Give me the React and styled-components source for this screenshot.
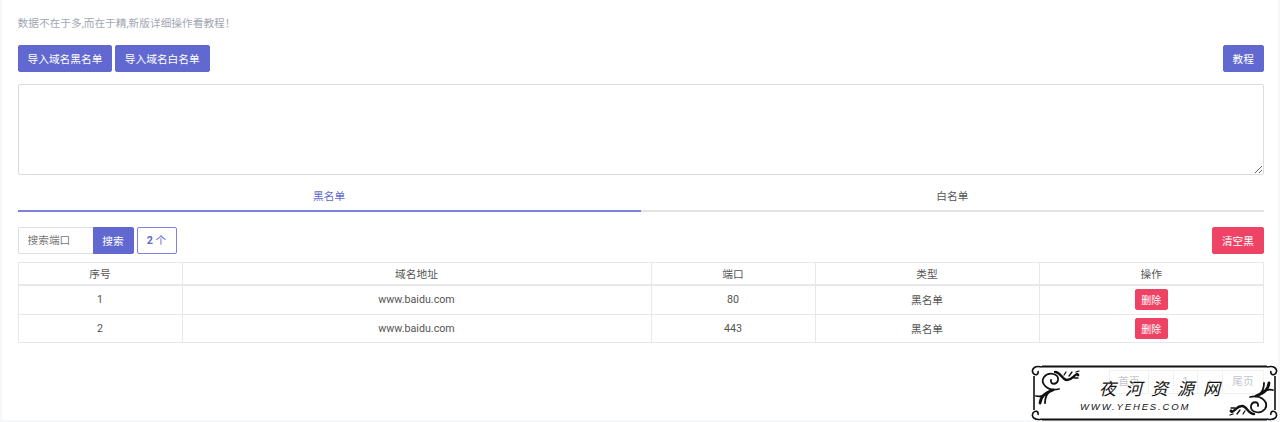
import React from "react";
import styled, { createGlobalStyle } from "styled-components";

const rows = [
  { id: 1, domain: "www.baidu.com", port: 80, type: "黑名单" },
  { id: 2, domain: "www.baidu.com", port: 443, type: "黑名单" },
];

const Global = createGlobalStyle`
  html, body {
    margin: 0;
    padding: 0;
    height: 100%;
    background: #f6f7f9;
    font-family: "Roboto", "Noto Sans CJK SC", sans-serif;
    font-size: 10.7px;
    color: #555;
    overflow: hidden;
  }
`;

const Page = styled.div`
  width: 1276px;
  height: 420px;
  margin-left: 2px;
  padding: 0 14px 0 15.5px;
  box-sizing: border-box;
  background: #fff;
  position: relative;
  display: flex;
  flex-direction: column;
`;

const Hint = styled.p`
  margin: 0;
  padding-top: 17px;
  height: 45px;
  line-height: 14px;
  box-sizing: border-box;
  color: #a2a8b3;
`;

const Toolbar = styled.div`
  display: flex;
  align-items: center;
  gap: 2.5px;
`;

const Button = styled.button`
  height: 27px;
  padding: 0 9px;
  border: 1px solid ${(p) => (p.$danger ? "#ef4365" : "#6169d0")};
  border-radius: 2px;
  background: ${(p) => (p.$danger ? "#ef4365" : "#6169d0")};
  color: #fff;
  font: inherit;
  white-space: nowrap;
  box-sizing: border-box;
`;

const PushRight = styled(Button)`
  margin-left: auto;
`;

const Textarea = styled.textarea`
  display: block;
  height: 91px;
  margin-top: 12px;
  border: 1px solid #d8dbe2;
  border-radius: 2px;
  box-sizing: border-box;
  width: 100%;
  background: #fff;
`;

const Tabs = styled.div`
  display: flex;
  margin-top: 11px;
`;

const Tab = styled.div`
  flex: 1;
  height: 26px;
  line-height: 22px;
  text-align: center;
  box-sizing: border-box;
  border-bottom: 2px solid ${(p) => (p.$active ? "#7b83dc" : "#e3e3e3")};
  color: ${(p) => (p.$active ? "#6169d0" : "#555")};
`;

const SearchBar = styled(Toolbar)`
  margin-top: 15px;
`;

const SearchInput = styled.input`
  width: 75px;
  height: 27px;
  padding: 0 9px;
  border: 1px solid #dcdfe5;
  border-right: 0;
  border-radius: 2px 0 0 2px;
  box-sizing: border-box;
  font: inherit;
  color: #555;
  &::placeholder {
    color: #777;
    opacity: 1;
  }
`;

const SearchButton = styled(Button)`
  width: 41px;
  padding: 0;
  border-radius: 0 2px 2px 0;
`;

const Joined = styled.div`
  display: flex;
`;

const Count = styled.div`
  width: 40px;
  height: 27px;
  margin-left: 0.5px;
  line-height: 25px;
  text-align: center;
  border: 1px solid #7b83dc;
  border-radius: 2px;
  box-sizing: border-box;
  color: #6169d0;
  b {
    font-weight: 700;
  }
`;

const Table = styled.table`
  width: 100%;
  margin-top: 8px;
  border-collapse: collapse;
  table-layout: fixed;
  text-align: center;
`;

const Col = styled.col`
  width: ${(p) => p.$w}px;
`;

const Th = styled.th`
  height: 21px;
  padding: 0;
  font-weight: 400;
  color: #555;
  border: 1px solid #e6e8ec;
  border-bottom-width: 2px;
`;

const Td = styled.td`
  height: 27.5px;
  padding: 0;
  color: #555;
  border: 1px solid #e6e8ec;
`;

const SmallButton = styled(Button)`
  display: block;
  margin: 0 auto;
  width: 33px;
  height: 21px;
  padding: 0;
  font-size: 10px;
`;

const Pager = styled.div`
  display: flex;
  justify-content: flex-end;
  margin-top: 27px;
`;

const PageCell = styled.div`
  width: ${(p) => p.$w}px;
  height: 24px;
  line-height: 22px;
  text-align: center;
  box-sizing: border-box;
  border: 1px solid #f0f1f3;
  border-left-width: ${(p) => (p.$first ? 1 : 0)}px;
  color: #c4c7cd;
`;

const Watermark = styled.div`
  position: absolute;
  right: -1px;
  bottom: -1px;
  width: 249px;
  height: 56px;
`;

const Frame = styled.svg`
  position: absolute;
  inset: 0;
`;

const MarkTitle = styled.div`
  position: absolute;
  left: 69px;
  top: 14px;
  font-family: "Liberation Serif", "Noto Sans CJK SC", serif;
  font-size: 17px;
  line-height: 22px;
  letter-spacing: 9px;
  font-style: italic;
  color: #111;
  white-space: nowrap;
`;

const MarkUrl = styled.div`
  position: absolute;
  left: 50px;
  top: 36px;
  font-family: "Liberation Sans", sans-serif;
  font-size: 9.5px;
  line-height: 11px;
  letter-spacing: 1.85px;
  font-style: italic;
  color: #111;
  white-space: nowrap;
`;

// 모서리 장식
const Scroll = ({ transform }) => (
  <g transform={transform} fill="none" stroke="#111" strokeLinecap="round">
    <path d="M10 38 C11 31 15 28 23 25" strokeWidth="2.8" />
    <path d="M6 31 C10 32 14 31 17 28 M15 38 C15 33 16 30 19 27" strokeWidth="1.8" />
    <path d="M29 24 C17 27 10 18 14 12 C19 6 29 9 28 15 C27 20 20 20 21 15" strokeWidth="1.8" />
    <path d="M25 7 C31 7 32 15 37 15 C42 15 43 11 47 9" strokeWidth="2.4" />
    <path d="M39 11 L42 7 M44 13 L48 13 M34 10 L36 7 M46 7 L49 6" strokeWidth="1.3" />
    <circle cx="48" cy="10" r="1.4" fill="#111" stroke="none" />
  </g>
);

const Logo = () => (
  <Watermark>
    <Frame width="249" height="56" viewBox="0 0 249 56">
      <g fill="none" stroke="#111">
        <path d="M12 1.5 H237 M12 54.5 H237" strokeWidth="1.8" />
        <path d="M4 11 V45 M245 11 V45" strokeWidth="1.6" />
        <path d="M12 2 C5 0 1 4 3 8 C5 11 9 10 8 6 M12 54 C5 56 1 52 3 48 C5 45 9 46 8 50" strokeWidth="1.6" />
        <path d="M237 2 C244 0 248 4 246 8 C244 11 240 10 241 6 M237 54 C244 56 248 52 246 48 C244 45 240 46 241 50" strokeWidth="1.6" />
      </g>
      <Scroll />
      <Scroll transform="translate(249 56) rotate(180)" />
    </Frame>
    <MarkTitle>夜河资源网</MarkTitle>
    <MarkUrl>WWW.YEHES.COM</MarkUrl>
  </Watermark>
);

const App = () => (
  <>
    <Global />
    <Page>
      <Hint>数据不在于多,而在于精,新版详细操作看教程！</Hint>
      <Toolbar>
        <Button>导入域名黑名单</Button>
        <Button>导入域名白名单</Button>
        <PushRight>教程</PushRight>
      </Toolbar>
      <Textarea />
      <Tabs>
        <Tab $active>黑名单</Tab>
        <Tab>白名单</Tab>
      </Tabs>
      <SearchBar>
        <Joined>
          <SearchInput placeholder="搜索端口" />
          <SearchButton>搜索</SearchButton>
        </Joined>
        <Count><b>2</b> 个</Count>
        <PushRight $danger>清空黑</PushRight>
      </SearchBar>
      <Table>
        <colgroup>
          <Col $w={164} />
          <Col $w={469} />
          <Col $w={164} />
          <Col $w={224} />
          <col />
        </colgroup>
        <thead>
          <tr>
            <Th>序号</Th>
            <Th>域名地址</Th>
            <Th>端口</Th>
            <Th>类型</Th>
            <Th>操作</Th>
          </tr>
        </thead>
        <tbody>
          {rows.map((row) => (
            <tr key={row.id}>
              <Td>{row.id}</Td>
              <Td>{row.domain}</Td>
              <Td>{row.port}</Td>
              <Td>{row.type}</Td>
              <Td>
                <SmallButton $danger>删除</SmallButton>
              </Td>
            </tr>
          ))}
        </tbody>
      </Table>
      <Pager>
        <PageCell $first $w={40}>首页</PageCell>
        <PageCell $w={25}>‹</PageCell>
        <PageCell $w={24}>1</PageCell>
        <PageCell $w={25}>›</PageCell>
        <PageCell $w={41}>尾页</PageCell>
      </Pager>
      <Logo />
    </Page>
  </>
);

export default App;
